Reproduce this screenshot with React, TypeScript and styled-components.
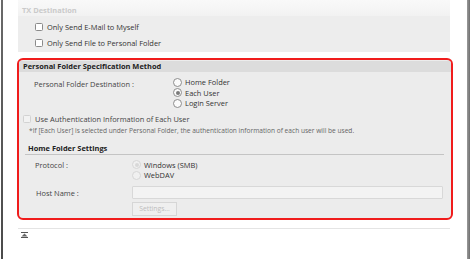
import React from "react";
import styled, { createGlobalStyle } from "styled-components";

const Global = createGlobalStyle`
  html, body { margin: 0; padding: 0; background: #fff; }
  body { font-family: "Open Sans", "Noto Sans", "Liberation Sans", sans-serif; color: #333; }
`;

const FS = "7.45px";

const Frame = styled.div`
  display: flex;
  width: 470px;
  height: 259px;
  overflow: hidden;
  background: #fff;
`;

const LeftEdge = styled.div`
  width: 2px;
  margin-left: 1px;
  background: linear-gradient(#6a6a6a, #4a4a4a);
  flex-shrink: 0;
`;

const Main = styled.div`
  display: flex;
  flex-direction: column;
  width: 432px;
  margin-left: 15px;
`;

const Scrollbar = styled.div`
  width: 3px;
  margin-left: 17px;
  background: linear-gradient(90deg, #9a9a9a, #6f6f6f);
  flex-shrink: 0;
`;

const TxSection = styled.section`
  background: #ededed;
  height: 52px;
  display: flex;
  flex-direction: column;
`;

const TxHeader = styled.div`
  height: 16px;
  box-sizing: border-box;
  background: linear-gradient(#f9f9f9, #f2f2f2);
  padding: 5px 0 0 4px;
  font-size: ${FS};
  font-weight: 700;
  line-height: 10px;
  color: #cacaca;
  margin-bottom: 3px;
`;

const CheckRow = styled.label<{ $indent: number }>`
  display: flex;
  align-items: center;
  gap: 4px;
  height: 16px;
  padding-left: ${(p) => p.$indent}px;
  font-size: ${FS};
  color: #333;
`;

const Box = styled.span<{ $disabled?: boolean }>`
  width: 6px;
  height: 6px;
  border: 1px solid ${(p) => (p.$disabled ? "#d2d2d2" : "#8a8a8a")};
  border-radius: 1.5px;
  background: ${(p) => (p.$disabled ? "#f2f2f2" : "#fff")};
  flex-shrink: 0;
`;

const RedBox = styled.section`
  margin: 6px -3px 0 -1px;
  border: 2px solid #f01c1c;
  border-radius: 6px;
  background: #ececec;
  height: 162px;
  box-sizing: border-box;
  display: flex;
  flex-direction: column;
  overflow: hidden;
`;

const SectionHeader = styled.div`
  background: #dcdcdc;
  height: 11px;
  margin-top: 1px;
  padding-left: 4px;
  font-size: ${FS};
  font-weight: 700;
  line-height: 11px;
  color: #222;
`;

const FieldRow = styled.div<{ $top: number; $labelLeft: number; $labelWidth: number }>`
  display: grid;
  grid-template-columns: ${(p) => p.$labelWidth}px 1fr;
  margin-top: ${(p) => p.$top}px;
  padding-left: ${(p) => p.$labelLeft}px;
  font-size: ${FS};
  align-items: start;
`;

const FieldLabel = styled.div<{ $pad?: number }>`
  color: #444;
  line-height: 10px;
  padding-top: ${(p) => p.$pad ?? 2}px;
`;

const RadioGroup = styled.div`
  display: flex;
  flex-direction: column;
`;

const RadioRow = styled.div`
  display: flex;
  align-items: center;
  gap: 3px;
  height: 10.5px;
  color: #333;
`;

const RadioDot = styled.span<{ $checked?: boolean; $disabled?: boolean }>`
  width: 7px;
  height: 7px;
  border-radius: 50%;
  border: 1px solid ${(p) => (p.$disabled ? "#d6d6d6" : "#8d8d8d")};
  background: ${(p) => (p.$disabled ? "#f0f0f0" : "#fbfbfb")};
  position: relative;
  flex-shrink: 0;
  &::after {
    content: "";
    display: ${(p) => (p.$checked ? "block" : "none")};
    position: absolute;
    left: 1.5px;
    top: 1.5px;
    width: 4px;
    height: 4px;
    border-radius: 50%;
    background: ${(p) => (p.$disabled ? "#d8d8d8" : "#7a7a7a")};
  }
`;

const AuthRow = styled.div`
  display: flex;
  align-items: center;
  gap: 4px;
  margin-top: 5px;
  padding-left: 4px;
  font-size: ${FS};
  color: #444;
  height: 11px;
`;

const Note = styled.div`
  font-size: 6.6px;
  color: #666;
  padding-left: 10px;
  margin-top: 1.5px;
  line-height: 10px;
  white-space: nowrap;
`;

const SubHeader = styled.div`
  margin: 6.5px 7px 0 6px;
  padding-left: 3px;
  border-bottom: 1px solid #c4c4c4;
  font-size: ${FS};
  font-weight: 700;
  color: #222;
  height: 11px;
  line-height: 10px;
`;

const TextInput = styled.div`
  height: 11px;
  width: 309px;
  border: 1px solid #d8d8d8;
  background: #f3f3f3;
  border-radius: 1px;
`;

const SettingsButton = styled.div`
  margin-left: 113px;
  margin-top: 3px;
  width: 43px;
  height: 12px;
  border: 1px solid #d6d6d6;
  background: #efefef;
  color: #bdbdbd;
  font-size: 6.8px;
  line-height: 12px;
  text-align: center;
`;

const Footer = styled.div`
  margin-top: 8px;
  border-top: 1px solid #e4e4e4;
  padding: 3px 0 0 3px;
  line-height: 0;
`;

const TopIcon = () => (
  <svg width="7" height="6" viewBox="0 0 7 6">
    <rect x="0" y="0" width="7" height="1" fill="#555" />
    <path d="M3.5 1.5 L6.5 4.5 L0.5 4.5 Z" fill="#666" />
    <rect x="0" y="5" width="7" height="1" fill="#555" />
  </svg>
);

export default function App() {
  return (
    <>
      <Global />
      <Frame>
        <LeftEdge />
        <Main>
          <TxSection>
            <TxHeader>TX Destination</TxHeader>
            <CheckRow $indent={17}>
              <Box />
              Only Send E-Mail to Myself
            </CheckRow>
            <CheckRow $indent={17}>
              <Box />
              Only Send File to Personal Folder
            </CheckRow>
          </TxSection>
          <RedBox>
            <SectionHeader>Personal Folder Specification Method</SectionHeader>
            <FieldRow $top={5} $labelLeft={15} $labelWidth={139}>
              <FieldLabel>Personal Folder Destination :</FieldLabel>
              <RadioGroup>
                <RadioRow>
                  <RadioDot />
                  Home Folder
                </RadioRow>
                <RadioRow>
                  <RadioDot $checked />
                  Each User
                </RadioRow>
                <RadioRow>
                  <RadioDot />
                  Login Server
                </RadioRow>
              </RadioGroup>
            </FieldRow>
            <AuthRow>
              <Box $disabled />
              Use Authentication Information of Each User
            </AuthRow>
            <Note>
              *If [Each User] is selected under Personal Folder, the authentication information of each user will be used.
            </Note>
            <SubHeader>Home Folder Settings</SubHeader>
            <FieldRow $top={5} $labelLeft={16} $labelWidth={97}>
              <FieldLabel $pad={0}>Protocol :</FieldLabel>
              <RadioGroup>
                <RadioRow>
                  <RadioDot $checked $disabled />
                  Windows (SMB)
                </RadioRow>
                <RadioRow>
                  <RadioDot $disabled />
                  WebDAV
                </RadioRow>
              </RadioGroup>
            </FieldRow>
            <FieldRow $top={5} $labelLeft={17} $labelWidth={96}>
              <FieldLabel $pad={2}>Host Name :</FieldLabel>
              <TextInput />
            </FieldRow>
            <SettingsButton>Settings...</SettingsButton>
          </RedBox>
          <Footer>
            <TopIcon />
          </Footer>
        </Main>
        <Scrollbar />
      </Frame>
    </>
  );
}
